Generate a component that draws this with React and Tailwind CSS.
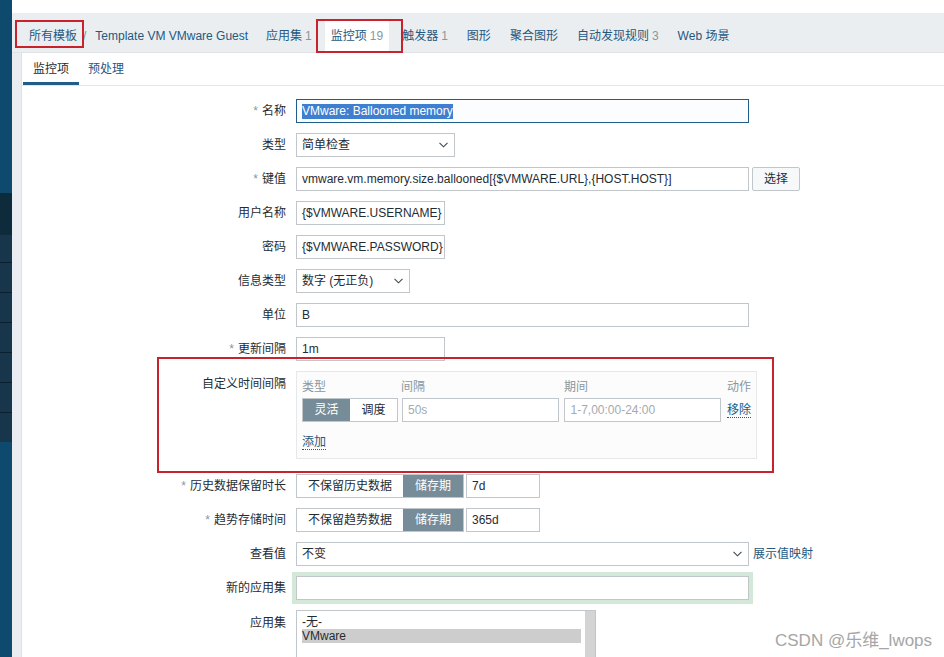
import React from "react";

const Chevron = ({ className = "" }) => (
  <svg width="9" height="6" viewBox="0 0 9 6" className={className}>
    <polyline points="0.5,0.8 4.5,4.8 8.5,0.8" fill="none" stroke="#3b4a52" strokeWidth="1.1" />
  </svg>
);

const Field = ({ children, className = "" }) => (
  <div className={`h-[24px] border border-[#c0c6ca] bg-white pl-[5px] flex items-center text-[12px] text-[#1f2c33] whitespace-nowrap overflow-hidden ${className}`}>
    {children}
  </div>
);

const Select = ({ value, className = "" }) => (
  <div className={`h-[24px] border border-[#c0c6ca] bg-white pl-[5px] pr-[6px] flex items-center justify-between text-[12px] text-[#1f2c33] ${className}`}>
    <span>{value}</span>
    <Chevron />
  </div>
);

const Row = ({ label, required, children, top }) => (
  <div className={`flex shrink-0 ${top ? "items-start" : "items-center"}`}>
    <div className={`w-[264px] text-right text-[12px] text-[#1f2c33] whitespace-nowrap ${top ? "pt-[4px]" : ""}`}>
      {required && <span className="text-[#8a979e] mr-[4px]">*</span>}
      {label}
    </div>
    <div className="ml-[10px] flex items-center">{children}</div>
  </div>
);

const Segment = ({ left, right, leftActive }) => (
  <div className="flex h-[24px] border border-[#c0c6ca] text-[12px] whitespace-nowrap">
    <div className={`flex items-center justify-center ${leftActive ? "bg-[#768d99] text-white" : "bg-white text-[#1f2c33]"} ${left.w}`}>{left.t}</div>
    <div className={`flex items-center justify-center ${!leftActive ? "bg-[#768d99] text-white" : "bg-white text-[#1f2c33]"} ${right.w}`}>{right.t}</div>
  </div>
);

const tabs = [
  { t: "应用集", n: "1" },
  { t: "监控项", n: "19", active: true },
  { t: "触发器", n: "1" },
  { t: "图形" },
  { t: "聚合图形" },
  { t: "自动发现规则", n: "3" },
  { t: "Web 场景" },
];

const sideLines = [262, 292, 322, 352, 382, 412];

export default function App() {
  return (
    <div className="relative w-[944px] h-[657px] overflow-hidden flex bg-white font-['Liberation_Sans','Noto_Sans_CJK_SC',sans-serif]">
      {/* sidebar */}
      <div className="w-[12px] flex flex-col shrink-0">
        <div className="h-[193px] shrink-0 bg-[#0d4a6e]" />
        <div className="h-[42px] shrink-0 bg-[#0e2b3c]" />
        <div className="h-[27px] shrink-0 bg-[#17364b]" />
        {sideLines.map((y) => (
          <div key={y} className="h-[30px] shrink-0 bg-[#17364b] border-t border-[#0b1f2c]" />
        ))}
        <div className="flex-1 bg-[#0d4a6e]" />
      </div>

      <div className="flex-1 flex flex-col min-h-0">
        <div className="h-[13px] shrink-0 bg-white" />
        {/* tab bar */}
        <div className="h-[40px] shrink-0 bg-[#ebeef1] border-b border-[#dfe3e6] flex items-end pl-[17px] text-[12px] whitespace-nowrap">
          <div className="h-[33px] flex items-center text-[#24587f]">
            <span>所有模板</span>
            <span className="ml-[6px] mr-[9px] text-[#768d99]">/</span>
            <span>Template VM VMware Guest</span>
          </div>
          <div className="flex items-end gap-[7px] ml-[12px]">
            {tabs.map((tab) => (
              <div
                key={tab.t}
                className={`h-[33px] px-[6px] flex items-center ${tab.active ? "bg-white" : ""} text-[#24587f]`}
              >
                {tab.t}
                {tab.n && <span className="ml-[3px] text-[#8a979e]">{tab.n}</span>}
              </div>
            ))}
          </div>
        </div>

        <div className="flex-1 flex min-h-0">
          <div className="w-[10px] shrink-0 bg-[#e9ecf0] border-r border-[#dde1e5]" />
          <div className="flex-1 bg-white">
            {/* sub tabs */}
            <div className="h-[33px] flex items-end border-b border-[#e3e6e9] pl-[1px] text-[12px]">
              <div className="h-[33px] px-[10px] flex items-center text-[#1f2c33] border-b-[3px] border-[#1f5e8a] pt-[3px]">监控项</div>
              <div className="h-[33px] px-[9px] flex items-center text-[#24587f]">预处理</div>
            </div>

            {/* form */}
            <div className="pt-[13px] flex flex-col gap-[10px]">
              <Row label="名称" required>
                <div className="h-[24px] w-[453px] border border-[#1f5e8a] bg-[#fbfdff] pl-[5px] flex items-center text-[12px]">
                  <span className="bg-[#3f7fd0] text-white leading-[15px]">VMware: Ballooned memory</span>
                </div>
              </Row>
              <Row label="类型">
                <Select value="简单检查" className="w-[159px]" />
              </Row>
              <Row label="键值" required>
                <Field className="w-[453px]">vmware.vm.memory.size.ballooned[{"{$VMWARE.URL},{HOST.HOST}"}]</Field>
                <div className="ml-[3px] h-[24px] w-[48px] border border-[#c0c6ca] rounded-[2px] bg-[#f7f8f9] flex items-center justify-center text-[12px] text-[#1f2c33]">选择</div>
              </Row>
              <Row label="用户名称">
                <Field className="w-[149px]">{"{$VMWARE.USERNAME}"}</Field>
              </Row>
              <Row label="密码">
                <Field className="w-[149px]">{"{$VMWARE.PASSWORD}"}</Field>
              </Row>
              <Row label="信息类型">
                <Select value="数字 (无正负)" className="w-[114px]" />
              </Row>
              <Row label="单位">
                <Field className="w-[453px]">B</Field>
              </Row>
              <Row label="更新间隔" required>
                <Field className="w-[149px]">1m</Field>
              </Row>
              <Row label="自定义时间间隔" top>
                <div className="w-[461px] h-[88px] border border-[#e6e8ea] bg-[#fcfcfc] px-[5px] pt-[4px] text-[12px] mb-[5px] whitespace-nowrap">
                  <div className="flex h-[22px] items-center text-[#8a979e]">
                    <div className="w-[99px]">类型</div>
                    <div className="w-[163px]">间隔</div>
                    <div className="w-[163px]">期间</div>
                    <div>动作</div>
                  </div>
                  <div className="flex items-center">
                    <Segment left={{ t: "灵活", w: "w-[47px]" }} right={{ t: "调度", w: "w-[47px]" }} leftActive />
                    <div className="ml-[4px] h-[24px] w-[158px] border border-[#c0c6ca] bg-white pl-[5px] flex items-center text-[#a3abb0]">50s</div>
                    <div className="ml-[5px] h-[24px] w-[157px] border border-[#c0c6ca] bg-white pl-[5px] flex items-center text-[#a3abb0]">1-7,00:00-24:00</div>
                    <span className="ml-[6px] text-[#24587f] border-b border-dotted border-[#24587f] leading-[14px]">移除</span>
                  </div>
                  <div className="mt-[11px]">
                    <span className="text-[#24587f] border-b border-dotted border-[#24587f] leading-[14px]">添加</span>
                  </div>
                </div>
              </Row>
              <Row label="历史数据保留时长" required>
                <Segment left={{ t: "不保留历史数据", w: "w-[106px]" }} right={{ t: "储存期", w: "w-[60px]" }} />
                <Field className="ml-[2px] w-[74px]">7d</Field>
              </Row>
              <Row label="趋势存储时间" required>
                <Segment left={{ t: "不保留趋势数据", w: "w-[106px]" }} right={{ t: "储存期", w: "w-[60px]" }} />
                <Field className="ml-[2px] w-[74px]">365d</Field>
              </Row>
              <Row label="查看值">
                <Select value="不变" className="w-[453px]" />
                <span className="ml-[4px] text-[12px] text-[#24587f] whitespace-nowrap">展示值映射</span>
              </Row>
              <Row label="新的应用集">
                <div className="w-[453px] h-[24px] border border-[#c0c6ca] bg-white shadow-[0_0_0_4px_#d3e8d9]" />
              </Row>
              <Row label="应用集" top>
                <div className="w-[300px] h-[80px] border border-[#c0c6ca] bg-white flex text-[12px] text-[#1f2c33]">
                  <div className="flex-1 pt-[4px] pl-[5px] pr-[4px]">
                    <div className="leading-[14px]">-无-</div>
                    <div className="leading-[14px] bg-[#cdcdcd]">VMware</div>
                  </div>
                  <div className="w-[10px] bg-[#d4d4d4]" />
                </div>
              </Row>
            </div>
          </div>
        </div>
      </div>

      {/* annotation boxes */}
      <div className="absolute left-[15px] top-[20px] w-[69px] h-[28px] border-2 border-[#c8232c]" />
      <div className="absolute left-[316px] top-[19px] w-[87px] h-[34px] border-2 border-[#c8232c]" />
      <div className="absolute left-[157px] top-[357px] w-[617px] h-[116px] border-2 border-[#c8232c]" />

      {/* watermark */}
      <div className="absolute left-[775px] top-[628px] text-[17px] text-[#a6a6a6]">CSDN @乐维_lwops</div>
    </div>
  );
}
